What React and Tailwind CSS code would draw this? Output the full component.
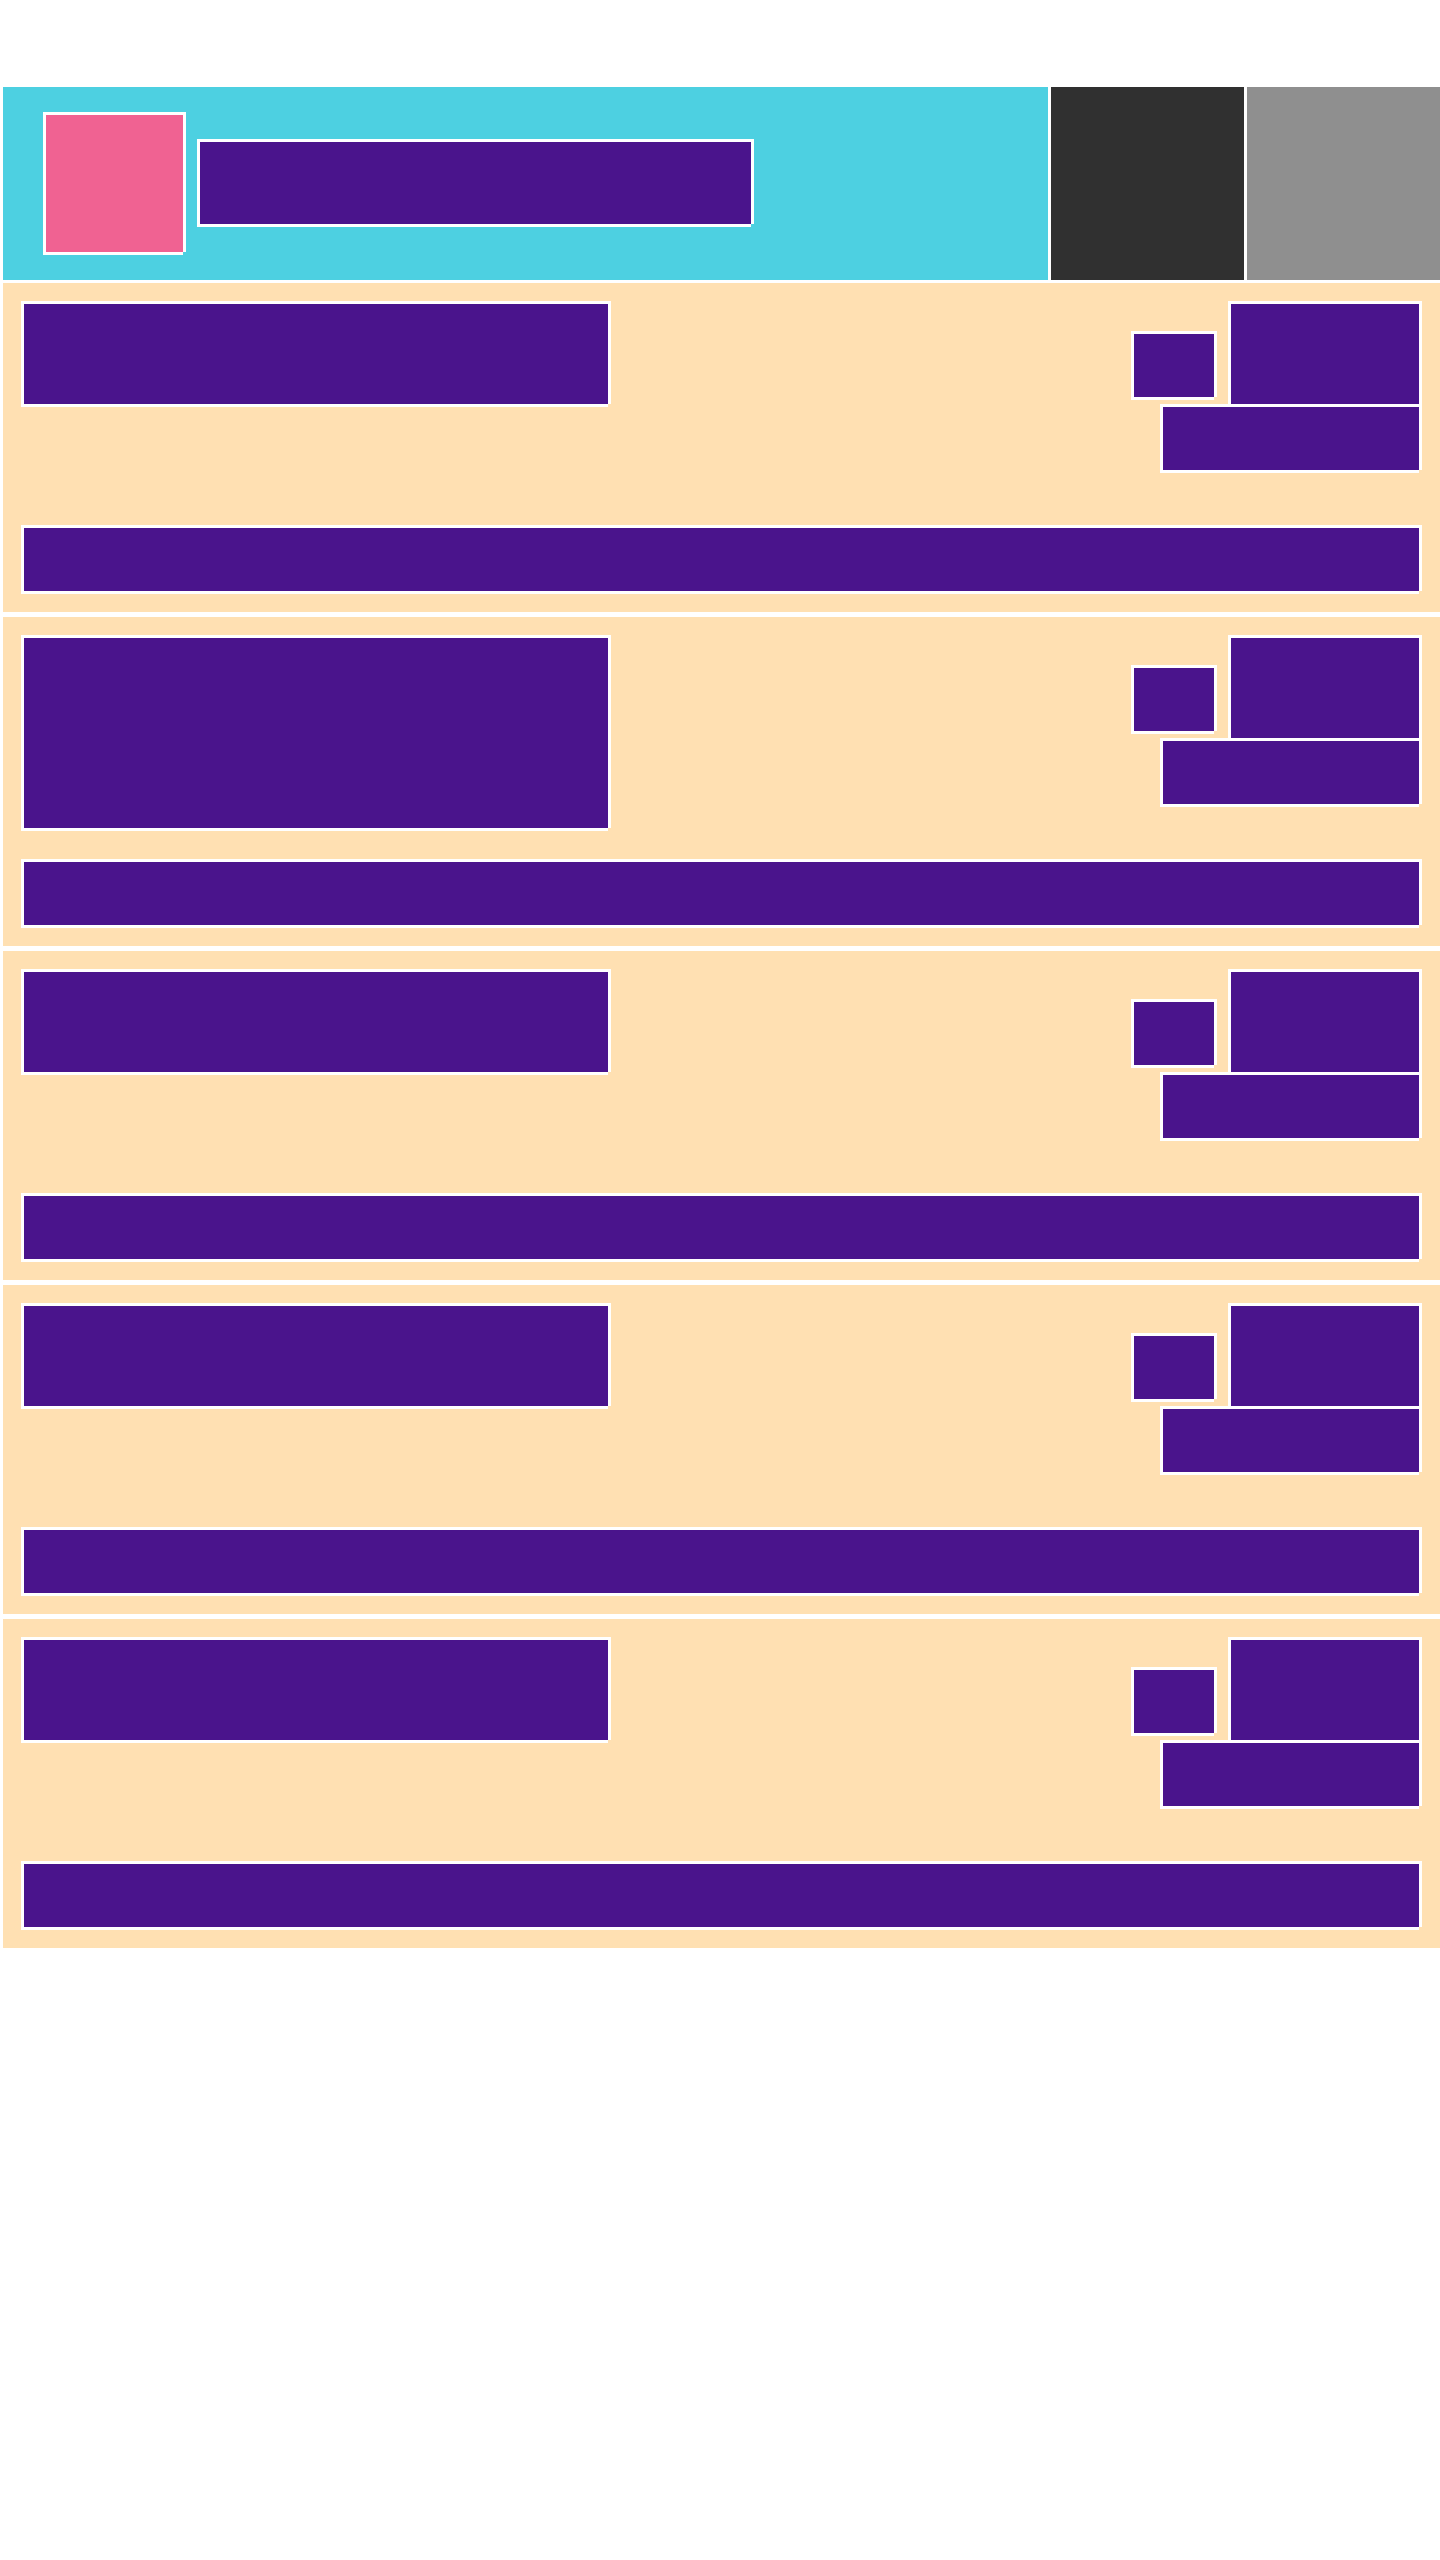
const block = "box-border border-t-[3px] border-l-[3px] border-white bg-[#4a148c] shadow-[3px_0_0_0_#ffffff,0_3px_0_0_#ffffff]";

function Row({ tall }) {
  return (
    <section className="box-border h-[329px] bg-[#ffe0b2] p-[18px]">
      <div className="flex h-[196px] justify-between pr-[3px]">
        <div className={`${block} w-[587px] ${tall ? "h-[193px]" : "h-[103px]"}`} />
        <div className="flex flex-col items-end">
          <div className="flex items-start gap-[14px]">
            <div className={`${block} mt-[30px] h-[66px] w-[83px]`} />
            <div className={`${block} h-[103px] w-[191px]`} />
          </div>
          <div className={`${block} h-[66px] w-[259px]`} />
        </div>
      </div>
      <div className={`${block} mt-[28px] mr-[3px] h-[66px]`} />
    </section>
  );
}

export default function App() {
  return (
    <div className="min-h-[2560px] bg-white pt-[87px] pl-[3px]">
      <header className="flex h-[193px] gap-[3px]">
        <div className="flex flex-1 items-start gap-[14px] bg-[#4dd0e1] pt-[25px] pl-[40px]">
          <div className={`${block} h-[140px] w-[140px] bg-[#f06292]`} />
          <div className={`${block} mt-[27px] h-[85px] w-[554px]`} />
        </div>
        <div className="w-[193px] bg-[#303030]" />
        <div className="w-[193px] bg-[#8f8f8f]" />
      </header>
      <main className="mt-[3px] flex flex-col gap-[5px]">
        <Row />
        <Row tall />
        <Row />
        <Row />
        <Row />
      </main>
    </div>
  );
}
